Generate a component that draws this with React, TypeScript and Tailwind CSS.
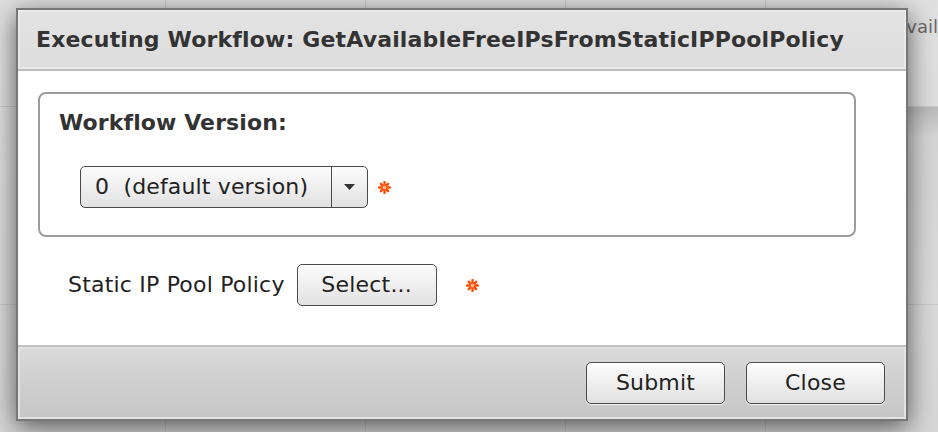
import React from 'react';

const font = { fontFamily: '"DejaVu Sans", Verdana, sans-serif' };

function Required() {
    return (
        <svg width="13" height="13" viewBox="0 0 12 12" className="shrink-0">
            <g stroke="#ff4a00" strokeWidth="2.2" strokeLinecap="round">
                <line x1="6" y1="1" x2="6" y2="11" />
                <line x1="1" y1="6" x2="11" y2="6" />
                <line x1="2.6" y1="2.6" x2="9.4" y2="9.4" />
                <line x1="9.4" y1="2.6" x2="2.6" y2="9.4" />
            </g>
            <circle cx="6" cy="6" r="1.8" fill="#ffb48a" />
        </svg>
    );
}

function GrayButton({ label, className }: { label: string; className: string }) {
    return (
        <button
            className={`${className} h-[42px] rounded-[5px] border-[1.5px] border-[#4a4a4a] bg-gradient-to-b from-[#fdfdfd] to-[#e1e1e1] text-[22px] leading-[26px] tracking-[0.2px] text-[#222] shadow-[0_1px_1px_rgba(255,255,255,0.8)]`}
        >
            {label}
        </button>
    );
}

function VersionSelect() {
    return (
        <div className="flex h-[42px] w-[288px] overflow-hidden rounded-[5px] border-[1.5px] border-[#4a4a4a] bg-gradient-to-b from-[#fdfdfd] to-[#e1e1e1]">
            <div className="flex flex-1 items-center whitespace-pre pl-[14px] text-[22px] leading-[26px] tracking-[0.15px] text-[#222]">0  (default version)</div>
            <div className="flex w-[36px] items-center justify-center border-l-[1.5px] border-[#4a4a4a]">
                <svg width="11" height="6" viewBox="0 0 11 6">
                    <path d="M0 0 H11 L5.5 6 Z" fill="#333" />
                </svg>
            </div>
        </div>
    );
}

function Backdrop() {
    const cell = 'border-r border-b border-[#d3d3d3]';
    return (
        <div className="grid h-[432px] w-[938px] grid-cols-[166px_200px_200px_200px_1fr] grid-rows-[107px_198px_1fr] bg-gradient-to-b from-[#ececec] to-[#e2e2e2]">
            <div className={cell} />
            <div className={cell} />
            <div className={cell} />
            <div className={cell} />
            <div className={`${cell} border-r-0 pl-[129px] pt-[13px] text-[18px] text-[#707070]`}>Avail</div>
            <div className={cell} />
            <div className={cell} />
            <div className={cell} />
            <div className={cell} />
            <div className={`${cell} border-r-0 bg-gradient-to-b from-[#c4c4c4] via-[#e0e0e0] via-15% to-[#e6e6e6]`} />
            <div className="border-r border-[#d3d3d3]" />
            <div className="border-r border-[#d3d3d3]" />
            <div className="border-r border-[#d3d3d3]" />
            <div className="border-r border-[#d3d3d3]" />
            <div />
        </div>
    );
}

export default function App() {
    return (
        <div className="relative h-[432px] w-[938px] overflow-hidden" style={font}>
            <Backdrop />
            <div className="absolute inset-0 bg-black/5" />

            {/* modal dialog */}
            <div className="absolute left-[16px] top-[8px] flex h-[413px] w-[892px] flex-col border-2 border-[#777] bg-white shadow-[0_6px_24px_rgba(0,0,0,0.6)]">
                <div className="flex h-[61px] shrink-0 items-center border-b-2 border-[#bdbdbd] bg-gradient-to-b from-[#e3e3e3] to-[#dddddd] pl-[18px] shadow-[inset_0_0_0_2px_#e9e9e9]">
                    <h1 className="whitespace-nowrap text-[22px] font-bold leading-[26px] tracking-[0.16px] text-[#333]">
                        Executing Workflow: GetAvailableFreeIPsFromStaticIPPoolPolicy
                    </h1>
                </div>

                <div className="flex-1 pl-[20px] pr-[50px] pt-[21px]">
                    <fieldset className="rounded-[8px] border-2 border-[#9c9c9c] pb-[27px] pl-[19px] pt-[16px]">
                        <h2 className="text-[22px] font-bold leading-[26px] tracking-[0.1px] text-[#333]">Workflow Version:</h2>
                        <div className="ml-[21px] mt-[30px] flex items-center gap-[10px]">
                            <VersionSelect />
                            <Required />
                        </div>
                    </fieldset>

                    <div className="ml-[30px] mt-[27px] flex items-center">
                        <span className="text-[22px] leading-[26px] tracking-[0.2px] text-[#222]">Static IP Pool Policy</span>
                        <GrayButton label="Select..." className="ml-[12px] w-[140px]" />
                        <span className="ml-[29px]">
                            <Required />
                        </span>
                    </div>
                </div>

                <div className="flex h-[74px] shrink-0 items-start justify-end gap-[21px] border-t-2 border-[#c2c2c2] bg-gradient-to-b from-[#d9d9d9] to-[#c6c6c6] pr-[21px] pt-[15px] shadow-[inset_0_0_0_2px_#e2e2e2]">
                    <GrayButton label="Submit" className="w-[139px]" />
                    <GrayButton label="Close" className="w-[139px]" />
                </div>
            </div>
        </div>
    );
}
